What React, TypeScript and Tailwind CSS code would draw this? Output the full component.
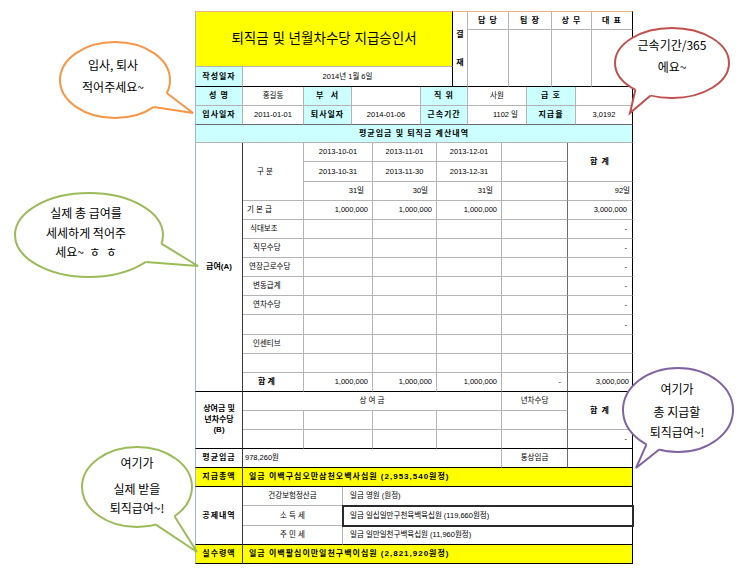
import React from 'react';

// shared cell pieces (border colours are given per cell, never overridden)
const bd = 'p-0 leading-none whitespace-nowrap overflow-hidden border-r border-b';
const lab = 'font-bold text-[8px] tracking-[1px] text-center';
const cyan = 'bg-[#ccffff]';
const yellow = 'bg-[#ffff00]';
const lft = 'border-l border-l-[#9cb9d6]';
const gg = 'border-r-[#b4b4b4] border-b-[#b4b4b4]';
const gk = 'border-r-[#b4b4b4] border-b-black';
const kg = 'border-r-black border-b-[#b4b4b4]';
const kk = 'border-r-black border-b-black';
const dk = 'border-r-[#3a3a3a] border-b-black';
const mg = 'border-r-[#6b6b6b] border-b-[#b4b4b4]';
const mk = 'border-r-[#6b6b6b] border-b-black';
const tbl = 'w-[438px] table-fixed border-separate border-spacing-0 text-[7.5px]';

const approvers = ['담 당', '팀 장', '상 무', '대 표'];

function TopSection() {
  return (
    <table className={tbl}>
      <colgroup>
        <col className="w-[48px]" />
        <col className="w-[210px]" />
        <col className="w-[15px]" />
        <col className="w-[41px]" />
        <col className="w-[43px]" />
        <col className="w-[40px]" />
        <col className="w-[41px]" />
      </colgroup>
      <tbody>
        <tr className="h-[19px]">
          <td
            colSpan={2}
            rowSpan={2}
            className={`${bd} ${lft} ${kg} border-t border-t-[#f4b183] ${yellow} text-center text-[13.5px]`}
          >
            퇴직금 및 년월차수당 지급승인서
          </td>
          <td rowSpan={3} className={`${bd} ${gk} border-t border-t-[#f4b183] font-bold text-[8px]`}>
            <div className="flex flex-col items-center gap-[20px]">
              <span>결</span>
              <span>재</span>
            </div>
          </td>
          {approvers.map((a, i) => (
            <td
              key={a}
              className={
                i === 3
                  ? `${bd} ${kg} border-t border-t-[#f4b183] ${lab}`
                  : `${bd} ${gg} border-t border-t-[#f4b183] ${lab}`
              }
            >
              {a}
            </td>
          ))}
        </tr>
        <tr className="h-[37px]">
          <td rowSpan={2} className={`${bd} ${gk}`} />
          <td rowSpan={2} className={`${bd} ${gk}`} />
          <td rowSpan={2} className={`${bd} ${gk}`} />
          <td rowSpan={2} className={`${bd} ${kk}`} />
        </tr>
        <tr className="h-[20px]">
          <td className={`${bd} ${lft} ${gk} ${cyan} ${lab}`}>작성일자</td>
          <td className={`${bd} ${kk} text-center`}>2014년 1월 6일</td>
        </tr>
      </tbody>
    </table>
  );
}

function InfoSection() {
  return (
    <table className={tbl}>
      <colgroup>
        <col className="w-[48px]" />
        <col className="w-[61px]" />
        <col className="w-[48px]" />
        <col className="w-[69px]" />
        <col className="w-[47px]" />
        <col className="w-[59px]" />
        <col className="w-[49px]" />
        <col className="w-[57px]" />
      </colgroup>
      <tbody>
        <tr className="h-[19px]">
          <td className={`${bd} ${lft} ${gg} ${cyan} ${lab}`}>성 명</td>
          <td className={`${bd} ${gg} text-center`}>홍길동</td>
          <td className={`${bd} ${gg} ${cyan} ${lab} whitespace-pre`}>부  서</td>
          <td className={`${bd} ${gg}`} />
          <td className={`${bd} ${gg} ${cyan} ${lab}`}>직 위</td>
          <td className={`${bd} ${gg} text-center`}>사원</td>
          <td className={`${bd} ${gg} ${cyan} ${lab}`}>급 호</td>
          <td className={`${bd} ${kg}`} />
        </tr>
        <tr className="h-[19px]">
          <td className={`${bd} ${lft} border-r-[#b4b4b4] border-b-[#6b6b6b] ${cyan} ${lab}`}>입사일자</td>
          <td className={`${bd} border-r-[#b4b4b4] border-b-[#6b6b6b] text-center`}>2011-01-01</td>
          <td className={`${bd} border-r-[#b4b4b4] border-b-[#6b6b6b] ${cyan} ${lab}`}>퇴사일자</td>
          <td className={`${bd} border-r-[#b4b4b4] border-b-[#6b6b6b] text-center`}>2014-01-06</td>
          <td className={`${bd} border-r-[#b4b4b4] border-b-[#6b6b6b] ${cyan} ${lab}`}>근속기간</td>
          <td className={`${bd} border-r-[#b4b4b4] border-b-[#6b6b6b] text-right pr-[8px]`}>1102 일</td>
          <td className={`${bd} border-r-[#b4b4b4] border-b-[#6b6b6b] ${cyan} ${lab}`}>지급율</td>
          <td className={`${bd} border-r-black border-b-[#6b6b6b] text-center`}>3,0192</td>
        </tr>
      </tbody>
    </table>
  );
}

type PayRow = { label: string; pad: string; v: string[]; total: string; h: string };

const payRows: PayRow[] = [
  { label: '기 본 급', pad: 'pl-[4px]', v: ['1,000,000', '1,000,000', '1,000,000', ''], total: '3,000,000', h: 'h-[19px]' },
  { label: '식대보조', pad: 'pl-[7px]', v: ['', '', '', ''], total: '-', h: 'h-[19px]' },
  { label: '직무수당', pad: 'pl-[10px]', v: ['', '', '', ''], total: '-', h: 'h-[19px]' },
  { label: '연장근로수당', pad: 'pl-[6px]', v: ['', '', '', ''], total: '-', h: 'h-[19px]' },
  { label: '변동급계', pad: 'pl-[10px]', v: ['', '', '', ''], total: '-', h: 'h-[19px]' },
  { label: '연차수당', pad: 'pl-[10px]', v: ['', '', '', ''], total: '-', h: 'h-[19px]' },
  { label: '', pad: '', v: ['', '', '', ''], total: '-', h: 'h-[20px]' },
  { label: '인센티브', pad: 'pl-[10px]', v: ['', '', '', ''], total: '', h: 'h-[19px]' },
  { label: '', pad: '', v: ['', '', '', ''], total: '', h: 'h-[19px]' },
];

function CalcSection() {
  return (
    <table className={tbl}>
      <colgroup>
        <col className="w-[48px]" />
        <col className="w-[61px]" />
        <col className="w-[69px]" />
        <col className="w-[64px]" />
        <col className="w-[65px]" />
        <col className="w-[66px]" />
        <col className="w-[65px]" />
      </colgroup>
      <tbody>
        <tr className="h-[18px]">
          <td colSpan={7} className={`${bd} ${lft} ${kg} ${cyan} ${lab}`}>
            평균임금 및 퇴직금 계산내역
          </td>
        </tr>

        <tr className="h-[19px]">
          <td rowSpan={13} className={`${bd} ${lft} ${dk} font-bold text-[8px] text-center`}>
            급여(A)
          </td>
          <td rowSpan={3} className={`${bd} ${gg} text-left pl-[14px]`}>구 분</td>
          <td className={`${bd} ${gg} text-center`}>2013-10-01</td>
          <td className={`${bd} ${gg} text-center`}>2013-11-01</td>
          <td className={`${bd} ${gg} text-center`}>2013-12-01</td>
          <td className={`${bd} ${mg}`} />
          <td rowSpan={2} className={`${bd} ${kg} ${lab}`}>합 계</td>
        </tr>
        <tr className="h-[20px]">
          <td className={`${bd} ${gg} text-center`}>2013-10-31</td>
          <td className={`${bd} ${gg} text-center`}>2013-11-30</td>
          <td className={`${bd} ${gg} text-center`}>2013-12-31</td>
          <td className={`${bd} ${mg}`} />
        </tr>
        <tr className="h-[19px]">
          <td className={`${bd} ${gg} text-right pr-[8px]`}>31일</td>
          <td className={`${bd} ${gg} text-right pr-[8px]`}>30일</td>
          <td className={`${bd} ${gg} text-right pr-[8px]`}>31일</td>
          <td className={`${bd} ${mg}`} />
          <td className={`${bd} ${kg} text-right pr-[2px]`}>92일</td>
        </tr>

        {payRows.map((r, i) => (
          <tr key={i} className={r.h}>
            <td className={`${bd} ${gg} text-left ${r.pad}`}>{r.label}</td>
            <td className={`${bd} ${gg} text-right pr-[4px]`}>{r.v[0]}</td>
            <td className={`${bd} ${gg} text-right pr-[4px]`}>{r.v[1]}</td>
            <td className={`${bd} ${gg} text-right pr-[4px]`}>{r.v[2]}</td>
            <td className={`${bd} ${mg} text-right pr-[4px]`}>{r.v[3]}</td>
            <td className={`${bd} ${kg} text-right pr-[5px]`}>{r.total}</td>
          </tr>
        ))}

        <tr className="h-[19px]">
          <td className={`${bd} ${gk} font-bold text-[8px] text-left pl-[15px]`}>합 계</td>
          <td className={`${bd} ${gk} text-right pr-[4px]`}>1,000,000</td>
          <td className={`${bd} ${gk} text-right pr-[4px]`}>1,000,000</td>
          <td className={`${bd} ${gk} text-right pr-[4px]`}>1,000,000</td>
          <td className={`${bd} ${mk} text-right pr-[6px]`}>-</td>
          <td className={`${bd} ${kk} text-right pr-[3px]`}>3,000,000</td>
        </tr>

        {/* 상여금 및 년차수당 */}
        <tr className="h-[19px]">
          <td rowSpan={3} className={`${bd} ${lft} ${dk} font-bold text-[8px] text-center`}>
            <div className="leading-[10.5px]">
              상여금 및
              <br />
              년차수당
              <br />
              (B)
            </div>
          </td>
          <td colSpan={4} className={`${bd} ${gg} text-center`}>상 여 금</td>
          <td className={`${bd} ${mg} text-center`}>년차수당</td>
          <td rowSpan={2} className={`${bd} ${kg} ${lab}`}>합 계</td>
        </tr>
        <tr className="h-[19px]">
          <td className={`${bd} ${gg}`} />
          <td className={`${bd} ${gg}`} />
          <td className={`${bd} ${gg}`} />
          <td className={`${bd} ${gg}`} />
          <td className={`${bd} ${mg}`} />
        </tr>
        <tr className="h-[19px]">
          <td className={`${bd} ${gk}`} />
          <td className={`${bd} ${gk}`} />
          <td className={`${bd} ${gk}`} />
          <td className={`${bd} ${gk}`} />
          <td className={`${bd} ${mk}`} />
          <td className={`${bd} ${kk} text-right pr-[5px]`}>-</td>
        </tr>

        <tr className="h-[19px]">
          <td className={`${bd} ${lft} ${dk} ${lab}`}>평균임금</td>
          <td colSpan={4} className={`${bd} ${gk} text-left pl-[2px]`}>978,260원</td>
          <td className={`${bd} ${mk} text-center`}>통상임금</td>
          <td className={`${bd} ${kk}`} />
        </tr>
      </tbody>
    </table>
  );
}

function PaySection() {
  return (
    <table className={tbl}>
      <colgroup>
        <col className="w-[48px]" />
        <col className="w-[100px]" />
        <col className="w-[290px]" />
      </colgroup>
      <tbody>
        <tr className="h-[19px]">
          <td className={`${bd} ${lft} ${dk} ${yellow} ${lab}`}>지급총액</td>
          <td colSpan={2} className={`${bd} ${kk} ${yellow} font-bold text-[8px] tracking-[1px] text-left pl-[6px]`}>
            일금 이백구십오만삼천오백사십원 (2,953,540원정)
          </td>
        </tr>
        <tr className="h-[19px]">
          <td rowSpan={3} className={`${bd} ${lft} ${dk} ${lab}`}>공제내역</td>
          <td className={`${bd} ${gg} text-center`}>건강보험정산금</td>
          <td className={`${bd} ${kg} text-left pl-[7px]`}>일금 영원 (원정)</td>
        </tr>
        <tr className="h-[20px]">
          <td className={`${bd} ${gg} text-center`}>소 득 세</td>
          <td className={`${bd} ${kg} text-left pl-[7px] outline-2 outline-[#2a2a2a] -outline-offset-1`}>
            일금 일십일만구천육백육십원 (119,660원정)
          </td>
        </tr>
        <tr className="h-[19px]">
          <td className={`${bd} ${gk} text-center`}>주 민 세</td>
          <td className={`${bd} ${kk} text-left pl-[7px]`}>일금 일만일천구백육십원 (11,960원정)</td>
        </tr>
        <tr className="h-[19px]">
          <td className={`${bd} ${lft} ${dk} ${yellow} ${lab}`}>실수령액</td>
          <td colSpan={2} className={`${bd} ${kk} ${yellow} font-bold text-[8px] tracking-[1px] text-left pl-[6px]`}>
            일금 이백팔십이만일천구백이십원 (2,821,920원정)
          </td>
        </tr>
      </tbody>
    </table>
  );
}

type BubbleProps = {
  cx: number;
  cy: number;
  rx: number;
  ry: number;
  a1: number;
  a2: number;
  tip: [number, number];
  color: string;
};

function Bubble({ cx, cy, rx, ry, a1, a2, tip, color }: BubbleProps) {
  const pt = (a: number, d = 0): [number, number] => {
    const r = (a * Math.PI) / 180;
    return [cx + (rx - d) * Math.cos(r), cy + (ry - d) * Math.sin(r)];
  };
  const b1 = pt(a1);
  const b2 = pt(a2);
  const i1 = pt(a1, 8);
  const i2 = pt(a2, 8);
  const f = (p: [number, number]) => `${p[0].toFixed(1)},${p[1].toFixed(1)}`;
  return (
    <g>
      <ellipse cx={cx} cy={cy} rx={rx} ry={ry} fill="white" stroke={color} strokeWidth={2} />
      <polygon points={[i1, b1, tip, b2, i2].map(f).join(' ')} fill="white" />
      <polyline points={[b1, tip, b2].map(f).join(' ')} fill="none" stroke={color} strokeWidth={2} />
    </g>
  );
}

function Bubbles() {
  return (
    <>
      <svg className="absolute left-0 top-0 pointer-events-none" width={740} height={578}>
        <Bubble cx={115} cy={80} rx={55} ry={38} a1={20} a2={45} tip={[193, 113]} color="#f79646" />
        <Bubble cx={672} cy={63} rx={57} ry={35} a1={130} a2={112} tip={[630, 113]} color="#c0504d" />
        <Bubble cx={89} cy={235} rx={74} ry={42} a1={12} a2={40} tip={[198, 266]} color="#9bbb59" />
        <Bubble cx={137} cy={487} rx={55} ry={40} a1={47} a2={70} tip={[197, 552]} color="#9bbb59" />
        <Bubble cx={678} cy={410} rx={55} ry={42} a1={125} a2={110} tip={[636, 468]} color="#8064a2" />
      </svg>

      <div className="absolute left-[53px] top-[54px] w-[120px] text-center text-[12px] leading-[22px] font-['Noto_Sans_CJK_KR',sans-serif]">
        입사, 퇴사
        <br />
        적어주세요~
      </div>
      <div className="absolute left-[612px] top-[34px] w-[120px] text-center text-[12px] leading-[22px] font-['Noto_Sans_CJK_KR',sans-serif]">
        근속기간/365
        <br />
        에요~
      </div>
      <div className="absolute left-[26px] top-[203px] w-[120px] text-center text-[12px] leading-[19.5px] font-['Noto_Sans_CJK_KR',sans-serif]">
        <div>실제 총 급여를</div>
        <div>세세하게 적어주</div>
        <div className="whitespace-pre">세요~  ㅎ  ㅎ</div>
      </div>
      <div className="absolute left-[77px] top-[452px] w-[120px] text-center text-[12px] font-['Noto_Sans_CJK_KR',sans-serif]">
        <div className="leading-[21px]">여기가</div>
        <div className="mt-[6px] leading-[19px]">실제 받을</div>
        <div className="leading-[19px]">퇴직급여~!</div>
      </div>
      <div className="absolute left-[617px] top-[378px] w-[120px] text-center text-[12px] font-['Noto_Sans_CJK_KR',sans-serif]">
        <div className="leading-[21px]">여기가</div>
        <div className="mt-[3px] leading-[20px]">총 지급할</div>
        <div className="leading-[20px]">퇴직급여~!</div>
      </div>
    </>
  );
}

export default function App() {
  return (
    <div className="relative w-[740px] h-[578px] overflow-hidden bg-white text-black font-['Liberation_Sans','Noto_Sans_CJK_KR',sans-serif]">
      <div className="pl-[195px] pt-[11px]">
        <TopSection />
        <InfoSection />
        <CalcSection />
        <PaySection />
      </div>
      <Bubbles />
    </div>
  );
}
